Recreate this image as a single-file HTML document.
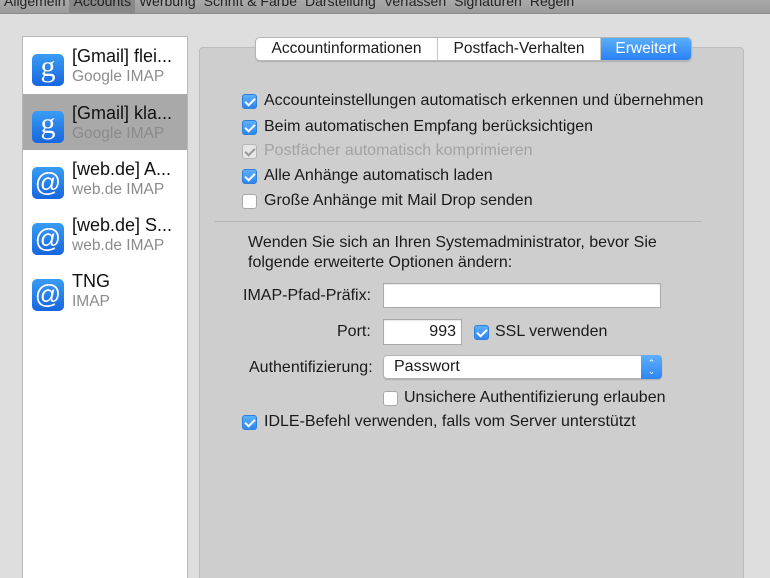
<!DOCTYPE html>
<html><head><meta charset="utf-8"><style>
*{box-sizing:border-box;margin:0;padding:0}
html,body{width:770px;height:578px;overflow:hidden}
body{background:#dedede;font-family:"Liberation Sans",Arial,sans-serif;font-size:16px;color:#1a1a1a;position:relative}
.top{position:absolute;left:0;top:0;width:770px;height:14px;background:linear-gradient(#a9a9a9,#9c9c9c);border-bottom:1px solid #8a8a8a;font-size:14px;line-height:2px;color:#222;white-space:nowrap;overflow:hidden}
.top span{display:inline-block;padding:0 4px;height:14px}
.top .sel{background:#888;}
.side{position:absolute;left:22px;top:36px;width:166px;height:560px;background:#fff;border:1px solid #b8b8b8}
.acc{position:absolute;left:0;width:164px;height:56px}
.acc .ic{position:absolute;left:9px;top:17px;width:32px;height:32px;border-radius:5px;background:linear-gradient(#3a9cf3,#1766e0);color:#fff;text-align:center;font-size:26px;line-height:30px}
.acc .g{font-family:"Liberation Serif",serif;font-size:30px;line-height:26px}
.acc .n{position:absolute;left:49px;top:9px;font-size:18px;color:#111}
.acc .s{position:absolute;left:49px;top:31px;font-size:15.5px;color:#8c8c8c}
.panel{position:absolute;left:199px;top:47px;width:545px;height:540px;background:#cecece;border:1px solid #bdbdbd;border-radius:4px}
.seg{position:absolute;left:255px;top:37px;height:24px;display:flex;border:1px solid #b5b5b5;border-radius:5px;background:#fff;overflow:hidden;box-shadow:0 1px 1px rgba(0,0,0,.15)}
.seg div{height:22px;line-height:22px;text-align:center;font-size:15.5px;border-right:1px solid #c8c8c8}
.seg .on{background:linear-gradient(#5aaefc,#2a80f5);color:#fff;border:none}
.cb{position:absolute;width:15px;height:15px;border-radius:3px;background:#fff;border:1px solid #a8a8a8}
.cb.c{background:linear-gradient(#5db0fb,#2d86f2);border-color:#2f7fdc}
.cb.c::after{content:"";position:absolute;left:4px;top:1px;width:4px;height:8px;border:solid #fff;border-width:0 2px 2px 0;transform:rotate(45deg)}
.cb.d{background:#e6e6e6;border-color:#b5b5b5}
.cb.d::after{content:"";position:absolute;left:4px;top:1px;width:4px;height:8px;border:solid #999;border-width:0 2px 2px 0;transform:rotate(45deg)}
.t{position:absolute;white-space:nowrap}
.in{position:absolute;background:#fff;border:1px solid #aaa;box-shadow:inset 0 1px 1px rgba(0,0,0,.1)}
</style></head><body>
<div class="top"><span>Allgemein</span><span class="sel">Accounts</span><span>Werbung</span><span>Schrift &amp; Farbe</span><span>Darstellung</span><span>Verfassen</span><span>Signaturen</span><span>Regeln</span></div>
<div class="side">
 <div class="acc" style="top:0"><div class="ic g">g</div><div class="n">[Gmail] flei...</div><div class="s">Google IMAP</div></div>
 <div class="acc" style="top:57px;background:#a9a9a9"><div class="ic g">g</div><div class="n">[Gmail] kla...</div><div class="s" style="color:#8a8a8a">Google IMAP</div></div>
 <div class="acc" style="top:113px"><div class="ic">@</div><div class="n">[web.de] A...</div><div class="s">web.de IMAP</div></div>
 <div class="acc" style="top:169px"><div class="ic">@</div><div class="n">[web.de] S...</div><div class="s">web.de IMAP</div></div>
 <div class="acc" style="top:225px"><div class="ic">@</div><div class="n">TNG</div><div class="s">IMAP</div></div>
</div>
<div class="panel"></div>
<div class="seg"><div style="width:182px">Accountinformationen</div><div style="width:163px">Postfach-Verhalten</div><div class="on" style="width:90px">Erweitert</div></div>

<div class="cb c" style="left:242px;top:94px"></div><div class="t" style="left:264px;top:92px">Accounteinstellungen automatisch erkennen und übernehmen</div>
<div class="cb c" style="left:242px;top:120px"></div><div class="t" style="left:264px;top:118px">Beim automatischen Empfang berücksichtigen</div>
<div class="cb d" style="left:242px;top:144px"></div><div class="t" style="left:264px;top:142px;color:#a2a2a2">Postfächer automatisch komprimieren</div>
<div class="cb c" style="left:242px;top:169px"></div><div class="t" style="left:264px;top:167px">Alle Anhänge automatisch laden</div>
<div class="cb" style="left:242px;top:194px"></div><div class="t" style="left:264px;top:192px">Große Anhänge mit Mail Drop senden</div>
<div style="position:absolute;left:215px;top:221px;width:486px;height:1px;background:#b3b3b3"></div>
<div class="t" style="left:248px;top:233px;line-height:20px">Wenden Sie sich an Ihren Systemadministrator, bevor Sie<br>folgende erweiterte Optionen ändern:</div>
<div class="t" style="left:243px;top:287px">IMAP-Pfad-Präfix:</div>
<div class="in" style="left:383px;top:283px;width:278px;height:25px"></div>
<div class="t" style="left:337px;top:323px">Port:</div>
<div class="in" style="left:383px;top:319px;width:79px;height:26px;text-align:right;padding:3px 5px 0 0">993</div>
<div class="cb c" style="left:474px;top:325px"></div><div class="t" style="left:495px;top:323px">SSL verwenden</div>
<div class="t" style="left:249px;top:359px">Authentifizierung:</div>
<div style="position:absolute;left:383px;top:355px;width:279px;height:24px;background:#fff;border:1px solid #b3b3b3;border-radius:4px;box-shadow:0 1px 1px rgba(0,0,0,.15);padding:2px 0 0 10px">Passwort<div style="position:absolute;right:-1px;top:-1px;width:21px;height:24px;background:linear-gradient(#5db0fb,#2d86f2);border-radius:0 4px 4px 0;color:#fff;font-size:9px;line-height:8px;text-align:center;padding-top:4px">⌃<br>⌄</div></div>
<div class="cb" style="left:383px;top:391px"></div><div class="t" style="left:404px;top:389px">Unsichere Authentifizierung erlauben</div>
<div class="cb c" style="left:242px;top:415px"></div><div class="t" style="left:264px;top:413px">IDLE-Befehl verwenden, falls vom Server unterstützt</div>
</body></html>
